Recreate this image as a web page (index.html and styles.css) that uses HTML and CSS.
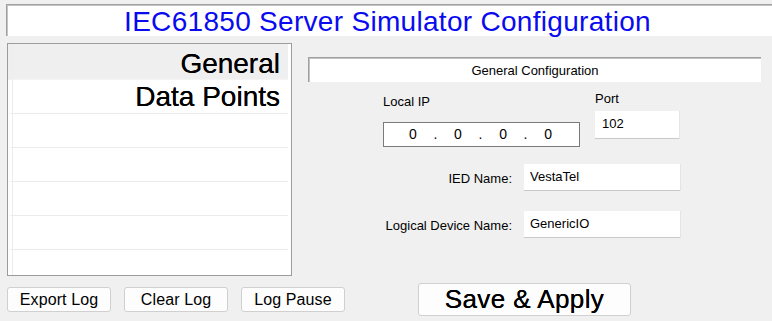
FILE: index.html
```html
<!DOCTYPE html>
<html lang="en">
<head>
    <meta charset="UTF-8">
    <title>IEC61850 Server Simulator Configuration</title>
    <link rel="stylesheet" href="styles.css">
</head>
<body>

    <!-- Window title banner -->
    <div class="banner">IEC61850 Server Simulator Configuration</div>

    <div class="main">
        <!-- Page list (left) -->
        <div class="page-list">
            <div class="page-row selected"><span>General</span></div>
            <div class="page-row"><span>Data Points</span></div>
            <div class="page-row"></div>
            <div class="page-row"></div>
            <div class="page-row"></div>
            <div class="page-row"></div>
            <div class="page-row last"></div>
        </div>

        <!-- Configuration panel (right) -->
        <div class="config">
            <div class="config-head">General Configuration</div>

            <div class="net-row">
                <div class="ip-group">
                    <div class="small-label">Local IP</div>
                    <div class="ip-box">
                        <span>0</span><span>.</span><span>0</span><span>.</span><span>0</span><span>.</span><span>0</span>
                    </div>
                </div>
                <div class="port-group">
                    <div class="small-label">Port</div>
                    <div class="text-box port">102</div>
                </div>
            </div>

            <div class="field-row first">
                <div class="field-label">IED Name:</div>
                <div class="text-box name">VestaTel</div>
            </div>
            <div class="field-row">
                <div class="field-label">Logical Device Name:</div>
                <div class="text-box name">GenericIO</div>
            </div>
        </div>
    </div>

    <!-- Bottom buttons -->
    <div class="actions">
        <button class="btn">Export Log</button>
        <button class="btn">Clear Log</button>
        <button class="btn">Log Pause</button>
        <button class="btn save">Save &amp; Apply</button>
    </div>

</body>
</html>
```

FILE: styles.css
```css
body, html {
    margin: 0;
    padding: 0;
    height: 100%;
    overflow: hidden;
}

body {
    background-color: #f0f0f0;
    font-family: "Liberation Sans", Arial, sans-serif;
    color: #000;
}

/* Sunken title box, runs off the right edge */
.banner {
    margin: 4px 0 0 6px;
    height: 31px;
    background-color: #fff;
    border-top: 1px solid #a0a0a0;
    border-left: 1px solid #a0a0a0;
    box-shadow: inset 1px 1px 0 #c4c4c4;
    color: #0a0af0;
    font-size: 28px;
    letter-spacing: 0.3px;
    line-height: 33px;
    text-align: center;
    padding-right: 4px;
}

.main {
    display: flex;
    margin-top: 7px;
}

.page-list {
    margin-left: 7px;
    width: 283px;
    height: 231px;
    border: 1px solid #9a9ca0;
    background-color: #fff;
    box-sizing: content-box;
    overflow: hidden;
}

.page-row {
    height: 33px;
    margin: 0 3px 0 0;
    border-bottom: 1px solid #ececec;
    border-left: 4px solid #fff;
    box-shadow: inset 1px 0 0 #ececec;
    font-size: 28px;
    line-height: 33px;
    text-align: right;
    padding-right: 8px;
    text-shadow: 0 0 0.4px #000;
}

.page-row.selected {
    height: 35px;
    line-height: 39px;
    background-color: #efefef;
    border-left-color: #efefef;
    border-bottom-color: #f4f4f4;
}

.page-row.last {
    border-bottom: none;
}

.config {
    margin-left: 16px;
    width: 453px;
    font-size: 13px;
}

.config-head {
    margin-top: 14px;
    height: 24px;
    background-color: #fff;
    border-top: 1px solid #a0a0a0;
    border-left: 1px solid #a0a0a0;
    box-shadow: inset 1px 1px 0 #c4c4c4;
    line-height: 25px;
    text-align: center;
}

.net-row {
    display: flex;
    margin-top: 9px;
    padding-left: 75px;
}

.small-label {
    height: 15px;
    line-height: 15px;
}

.ip-group .small-label {
    margin-top: 3px;
    margin-bottom: 13px;
}

.ip-box {
    display: flex;
    justify-content: space-between;
    width: 143px;
    height: 23px;
    padding: 0 27px 0 25px;
    border: 1px solid #7a7a7a;
    background-color: #fff;
    line-height: 23px;
    font-size: 14px;
}

.port-group {
    margin-left: 15px;
}

.port-group .small-label {
    margin-bottom: 5px;
}

.text-box {
    height: 27px;
    background-color: #fff;
    border-bottom: 1px solid #c9c9c9;
    box-shadow: 1px 0 0 #e4e4e4;
    line-height: 26px;
    padding-left: 7px;
    box-sizing: border-box;
    font-size: 13px;
}

.text-box.port {
    width: 84px;
    height: 28px;
}

.text-box.name {
    width: 156px;
    padding-left: 6px;
}

.field-row {
    display: flex;
    align-items: center;
    margin-top: 20px;
}

.field-row.first {
    margin-top: 17px;
}

.field-label {
    width: 204px;
    text-align: right;
    margin-right: 12px;
    margin-top: 2px;
}

.actions {
    display: flex;
    align-items: center;
    margin-top: 7px;
    padding-left: 7px;
}

.btn {
    width: 104px;
    height: 25px;
    margin-right: 13px;
    padding: 0;
    background-color: #fdfdfd;
    border: 1px solid #d0d0d0;
    border-radius: 3px;
    font-family: "Liberation Sans", Arial, sans-serif;
    font-size: 16px;
    letter-spacing: 0.1px;
    color: #000;
}

.btn.save {
    width: 213px;
    height: 33px;
    margin-left: 60px;
    font-size: 26px;
    letter-spacing: 0.4px;
    text-shadow: 0 0 0.4px #000;
}
```
